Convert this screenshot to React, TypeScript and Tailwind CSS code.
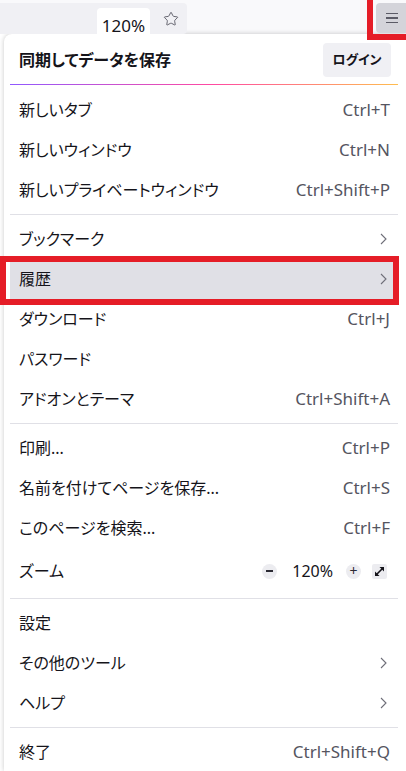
import { Star } from "lucide-react";

type Item = {
  label: string;
  shortcut?: string;
  arrow?: boolean;
  highlight?: boolean;
  zoom?: boolean;
};

const sections: Item[][] = [
  [
    { label: "新しいタブ", shortcut: "Ctrl+T" },
    { label: "新しいウィンドウ", shortcut: "Ctrl+N" },
    { label: "新しいプライベートウィンドウ", shortcut: "Ctrl+Shift+P" },
  ],
  [
    { label: "ブックマーク", arrow: true },
    { label: "履歴", arrow: true, highlight: true },
    { label: "ダウンロード", shortcut: "Ctrl+J" },
    { label: "パスワード" },
    { label: "アドオンとテーマ", shortcut: "Ctrl+Shift+A" },
  ],
  [
    { label: "印刷...", shortcut: "Ctrl+P" },
    { label: "名前を付けてページを保存...", shortcut: "Ctrl+S" },
    { label: "このページを検索...", shortcut: "Ctrl+F" },
    { label: "ズーム", zoom: true },
  ],
  [
    { label: "設定" },
    { label: "その他のツール", arrow: true },
    { label: "ヘルプ", arrow: true },
  ],
  [{ label: "終了", shortcut: "Ctrl+Shift+Q" }],
];

function Chevron() {
  return (
    <svg width="7" height="12" viewBox="0 0 7 12" className="mr-[3px]">
      <path d="M1 1 L6 6 L1 11" fill="none" stroke="#6e6e78" strokeWidth="1.1" />
    </svg>
  );
}

function ZoomControls() {
  return (
    <div className="flex items-center">
      <span className="w-[15px] h-[15px] rounded-full bg-[#ececf0] flex items-center justify-center">
        <span className="w-[7px] h-[1.5px] bg-[#2b2a33]" />
      </span>
      <span className="ml-[15px] text-[16px] text-[#15141a]">120%</span>
      <span className="ml-[13px] w-[15px] h-[15px] rounded-full bg-[#ececf0] flex items-center justify-center text-[14px] leading-none text-[#2b2a33]">
        +
      </span>
      <span className="ml-[11px] mr-[3px] w-[15px] h-[15px] rounded-[2px] bg-[#ececf0] flex items-center justify-center">
        <svg width="11" height="11" viewBox="0 0 11 11">
          <path d="M2.5 8.5 L8.5 2.5" stroke="#15141a" strokeWidth="1.6" />
          <path d="M5.5 1 L10 1 L10 5.5 Z" fill="#15141a" />
          <path d="M1 5.5 L1 10 L5.5 10 Z" fill="#15141a" />
        </svg>
      </span>
    </div>
  );
}

function Row({ item }: { item: Item }) {
  return (
    <div
      className={`relative flex items-center pl-[9px] pr-[8px] ${item.zoom ? "h-[46px]" : "h-[40px]"} ${
        item.highlight ? "bg-[#e0e0e6]" : ""
      }`}
    >
      <span className="flex-1 text-[16px] text-[#15141a]">{item.label}</span>
      {item.shortcut && <span className="text-[17px] text-[#55555f]">{item.shortcut}</span>}
      {item.arrow && <Chevron />}
      {item.zoom && <ZoomControls />}
      {item.highlight && (
        <div className="absolute -left-[10px] -right-[1px] -top-[3px] -bottom-[6px] border-[6px] border-[#e51d27] z-10" />
      )}
    </div>
  );
}

export default function App() {
  return (
    <div className="relative w-[406px] h-[771px] overflow-hidden bg-white font-[family-name:'Noto_Sans','Noto_Sans_CJK_JP',sans-serif] [font-feature-settings:'palt']">
      {/* toolbar */}
      <div className="flex h-[34px] bg-[#f9f9fb] overflow-hidden">
        <div className="relative w-[187px] h-[31px] mt-[3px] bg-[#f0f0f4] rounded-r-[4px]">
          <div className="absolute left-[97px] top-[5px] w-[53px] h-[30px] bg-white rounded-t-[4px] text-center text-[17px] leading-[20px] pt-[8px] text-[#15141a]">
            120%
          </div>
          <Star className="absolute left-[163px] top-[8px]" size={16} strokeWidth={1.4} color="#5b5b66" />
        </div>
        <div className="ml-auto mt-[3px] w-[30px] h-[30px] bg-[#d4d4da] rounded-l-[4px] flex flex-col items-center justify-center gap-[3px] pl-[1px]">
          <span className="w-[12px] h-[1.5px] bg-[#5b5b66]" />
          <span className="w-[12px] h-[1.5px] bg-[#5b5b66]" />
          <span className="w-[12px] h-[1.5px] bg-[#5b5b66]" />
        </div>
      </div>
      <div className="absolute right-0 top-0 w-[39px] h-[40px] border-l-[6px] border-b-[6px] border-[#e51d27] z-20" />

      {/* menu panel */}
      <div className="ml-[4px] bg-white rounded-tl-[8px] shadow-[0_0_5px_rgba(0,0,0,0.22)] pl-[6px] pr-[8px] pt-[9px] h-[737px]">
        <div className="flex items-center h-[34px] pl-[9px] pr-[7px]">
          <span className="flex-1 text-[16px] font-bold text-[#15141a]">同期してデータを保存</span>
          <span className="w-[68px] h-[34px] rounded-[4px] bg-[#f0f0f4] flex items-center justify-center text-[13px] font-bold text-[#15141a]">
            ログイン
          </span>
        </div>
        <div className="mt-[7px] mb-[5px] h-[1px] bg-[linear-gradient(90deg,#9059ff_0%,#ff4aa2_52%,#ffbd4f_100%)]" />
        {sections.map((sec, i) => (
          <div key={i}>
            {i > 0 && <div className="my-[4px] h-[1px] bg-[#e0e0e6]" />}
            {sec.map((item) => (
              <Row key={item.label} item={item} />
            ))}
          </div>
        ))}
      </div>
    </div>
  );
}
